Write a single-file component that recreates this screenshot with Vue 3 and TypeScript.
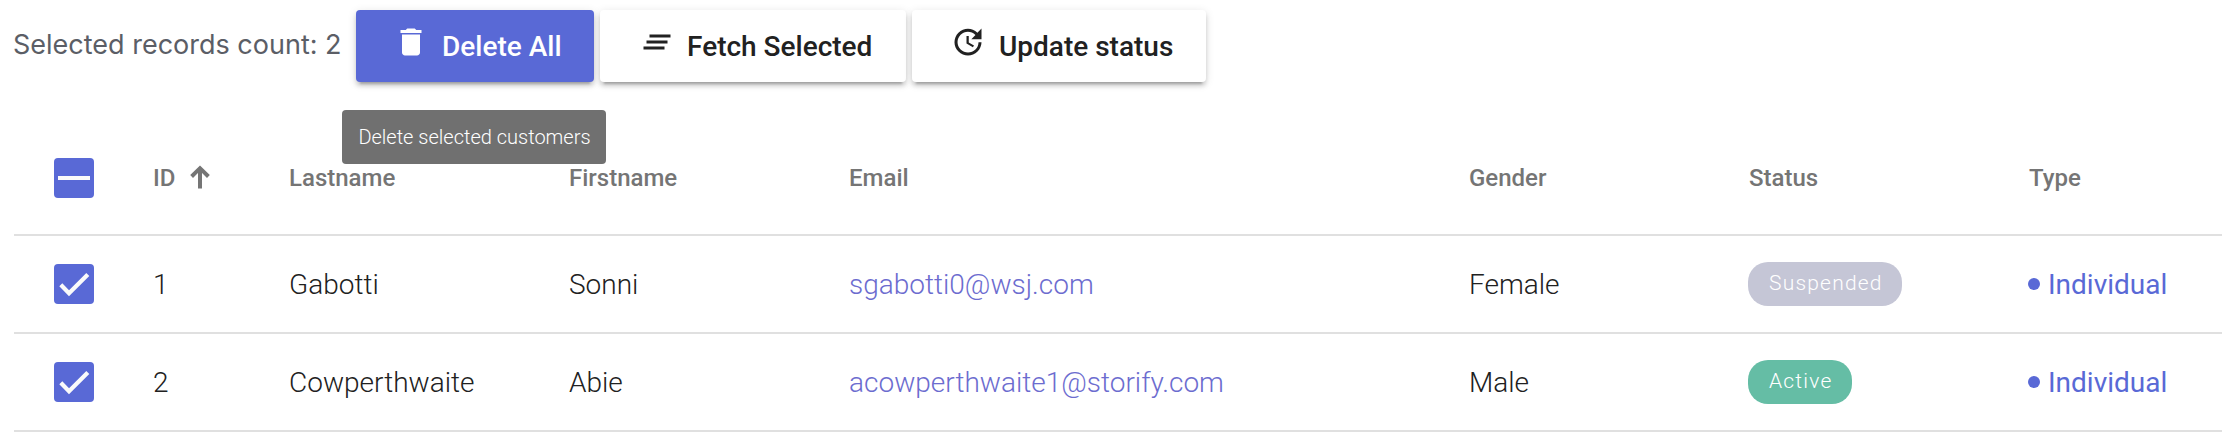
<script setup lang="ts">
interface Customer {
  id: number
  lastname: string
  firstname: string
  email: string
  gender: string
  status: 'Suspended' | 'Active'
  type: string
}

const columns: string[] = ['Lastname', 'Firstname', 'Email', 'Gender', 'Status', 'Type']

const customers: Customer[] = [
  { id: 1, lastname: 'Gabotti', firstname: 'Sonni', email: 'sgabotti0@wsj.com', gender: 'Female', status: 'Suspended', type: 'Individual' },
  { id: 2, lastname: 'Cowperthwaite', firstname: 'Abie', email: 'acowperthwaite1@storify.com', gender: 'Male', status: 'Active', type: 'Individual' },
]
</script>

<template>
  <div class="page">
    <div class="toolbar">
      <span class="count">Selected records count: {{ customers.length }}</span>
      <button class="btn delete" type="button">
        <svg class="icon" viewBox="0 0 24 24"><path d="M6 19c0 1.1.9 2 2 2h8c1.1 0 2-.9 2-2V7H6v12zM19 4h-3.500l-1-1h-5l-1 1H5v2h14V4z" /></svg>
        <span>Delete All</span>
        <span class="tooltip" role="tooltip">Delete selected customers</span>
      </button>
      <button class="btn fetch" type="button">
        <svg class="icon" viewBox="0 0 24 24"><path d="M5 13h14v-2H5v2zm-2 4h14v-2H3v2zM7 7v2h14V7H7z" /></svg>
        <span>Fetch Selected</span>
      </button>
      <button class="btn update" type="button">
        <svg class="icon" viewBox="0 0 24 24"><path d="M21 10.120h-6.780l2.740-2.820c-2.730-2.700-7.150-2.800-9.880-.1-2.730 2.710-2.730 7.080 0 9.790s7.150 2.710 9.880 0C18.320 15.650 19 14.080 19 12.100h2c0 1.980-.88 4.550-2.640 6.290-3.510 3.480-9.210 3.480-12.720 0-3.500-3.470-3.530-9.110-.02-12.580s9.140-3.470 12.650 0L21 3v7.120zM12.500 8v4.250l3.500 2.080-.72 1.210L11 13V8h1.500z" /></svg>
        <span>Update status</span>
      </button>
    </div>

    <div class="table">
      <div class="row head">
        <div class="check">
          <svg class="box" viewBox="0 0 40 40"><rect width="40" height="40" rx="4" fill="#5969d6" /><path d="M4 20h32" stroke="#fafafa" stroke-width="4" /></svg>
        </div>
        <div class="idcell">
          <span>ID</span>
          <svg class="arrow" viewBox="0 0 24 24"><path d="M12 23.500V3M3.600 11.500L12 3.200l8.400 8.300" fill="none" stroke="#757575" stroke-width="4" /></svg>
        </div>
        <div v-for="c in columns" :key="c">{{ c }}</div>
      </div>
      <div v-for="p in customers" :key="p.id" class="row">
        <div class="check">
          <svg class="box" viewBox="0 0 40 40"><rect width="40" height="40" rx="4" fill="#5969d6" /><path d="M6.800 20.800L15 29.200L33.800 10.400" fill="none" stroke="#fafafa" stroke-width="4.200" /></svg>
        </div>
        <div class="cell">{{ p.id }}</div>
        <div class="cell">{{ p.lastname }}</div>
        <div class="cell">{{ p.firstname }}</div>
        <div class="cell"><a class="email">{{ p.email }}</a></div>
        <div class="cell">{{ p.gender }}</div>
        <div><span class="badge" :class="p.status.toLowerCase()">{{ p.status }}</span></div>
        <div class="type"><i class="dot"></i><span class="cell">{{ p.type }}</span></div>
      </div>
    </div>
  </div>
</template>

<style>
body { background: #fff; overflow: hidden; }
</style>

<style scoped>
.page {
  box-sizing: border-box;
  width: 2222px;
  height: 432px;
  padding: 10px 0 0 14px;
  overflow: hidden;
  background: #fff;
  font-family: Roboto, sans-serif;
}
.toolbar { display: flex; height: 72px; }
.count {
  width: 343px;
  margin-left: -1px;
  flex: none;
  white-space: nowrap;
  font: 400 27px/70px Inter, sans-serif;
  letter-spacing: 0;
  color: #5b5e66;
}
.btn {
  position: relative;
  display: flex;
  box-sizing: border-box;
  height: 72px;
  margin: 0 6px 0 0;
  padding: 0 0 0 38.500px;
  border: 0;
  border-radius: 4px;
  background: #fff;
  color: #212121;
  font: 500 28px/74px Roboto, sans-serif;
  text-align: left;
  white-space: nowrap;
  box-shadow: 0 6px 2px -4px rgba(0, 0, 0, .2), 0 4px 4px rgba(0, 0, 0, .14), 0 2px 10px rgba(0, 0, 0, .12);
}
.delete { width: 238px; padding-left: 37px; background: #5969d6; color: #fff; }
.delete .icon { margin-right: 13px; }
.fetch { width: 306px; }
.update { width: 294px; }
.update .icon { margin-left: -1px; margin-right: 13.500px; }
.icon { width: 36px; height: 36px; margin: 14px 12.500px 0 0; fill: currentColor; flex: none; }
.tooltip {
  position: absolute;
  z-index: 2;
  left: -14px;
  top: 100px;
  box-sizing: border-box;
  width: 264px;
  height: 54px;
  padding-left: 1px;
  border-radius: 4px;
  background: #707070;
  color: #fff;
  font: 300 20px/55px Roboto, sans-serif;
  text-align: center;
}
.table { margin-top: 40px; }
.row {
  display: grid;
  grid-template-columns: 139px 136px 280px 280px 620px 280px 280px 1fr;
  align-items: center;
  box-sizing: border-box;
  height: 98px;
  border-bottom: 2px solid #e0e0e0;
  color: #212121;
  font-size: 28px;
  font-weight: 300;
  line-height: 40px;
}
.cell { padding-top: 2px; }
.head {
  height: 114px;
  align-items: start;
  padding-top: 36px;
  color: #757575;
  font-size: 24px;
  font-weight: 500;
}
.check { padding-left: 40px; height: 40px; }
.box { display: block; width: 40px; height: 40px; }
.idcell { display: flex; }
.arrow { width: 24px; height: 24px; margin: 7px 0 0 13px; }
.email { color: #6c6ccf; }
.badge {
  display: block;
  width: max-content;
  height: 44px;
  box-sizing: border-box;
  margin-left: -1px;
  padding: 0 19.500px 0 21px;
  border-radius: 20px;
  color: #fff;
  font-size: 21px;
  line-height: 43px;
  letter-spacing: 1.200px;
}
.suspended { background: #c5c6d6; }
.active { background: #65bda5; }
.type { display: flex; align-items: center; margin-left: -1px; color: #5969d6; font-weight: 400; }
.dot { width: 12px; height: 12px; margin-right: 8px; border-radius: 50%; background: #5969d6; }
</style>
